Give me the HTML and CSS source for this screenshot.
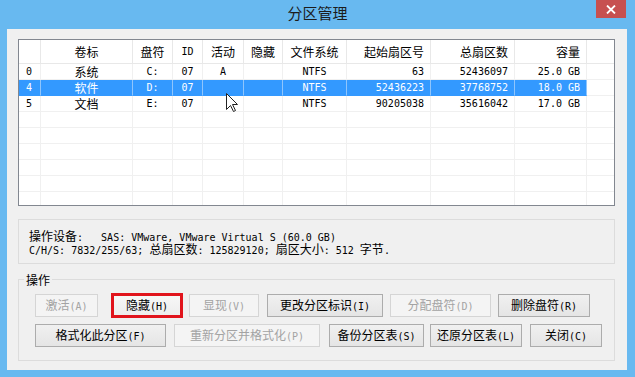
FILE: index.html
```html
<!DOCTYPE html>
<html lang="zh-CN">
<head>
  <meta charset="UTF-8">
  <meta name="viewport" content="width=device-width, initial-scale=1">
  <title>分区管理</title>
  <link rel="stylesheet" href="styles.css">
</head>
<body>
  <div class="window">
    <!-- Caption bar -->
    <div class="titlebar">
      <span class="title">分区管理</span>
      <button class="close" title="关闭">
        <svg width="10" height="9" viewBox="0 0 10 9"><path d="M1 0.5 L9 8.5 M9 0.5 L1 8.5" stroke="#fff" stroke-width="1.8"/></svg>
      </button>
    </div>

    <div class="client">
      <!-- Partition list -->
      <div class="listview">
        <div class="row head">
          <div class="cell"></div>
          <div class="cell zh c">卷标</div>
          <div class="cell zh c">盘符</div>
          <div class="cell c">ID</div>
          <div class="cell zh c">活动</div>
          <div class="cell zh c">隐藏</div>
          <div class="cell zh c">文件系统</div>
          <div class="cell zh r">起始扇区号</div>
          <div class="cell zh r">总扇区数</div>
          <div class="cell zh r">容量</div>
          <div class="cell"></div>
        </div>
        <div class="row">
          <div class="cell l">0</div>
          <div class="cell zh c">系统</div>
          <div class="cell c">C:</div>
          <div class="cell c">07</div>
          <div class="cell c">A</div>
          <div class="cell"></div>
          <div class="cell c">NTFS</div>
          <div class="cell r">63</div>
          <div class="cell r">52436097</div>
          <div class="cell r">25.0 GB</div>
          <div class="cell"></div>
        </div>
        <div class="row sel">
          <div class="cell l">4</div>
          <div class="cell zh c">软件</div>
          <div class="cell c">D:</div>
          <div class="cell c">07</div>
          <div class="cell"></div>
          <div class="cell"></div>
          <div class="cell c">NTFS</div>
          <div class="cell r">52436223</div>
          <div class="cell r">37768752</div>
          <div class="cell r">18.0 GB</div>
          <div class="cell"></div>
        </div>
        <div class="row">
          <div class="cell l">5</div>
          <div class="cell zh c">文档</div>
          <div class="cell c">E:</div>
          <div class="cell c">07</div>
          <div class="cell"></div>
          <div class="cell"></div>
          <div class="cell c">NTFS</div>
          <div class="cell r">90205038</div>
          <div class="cell r">35616042</div>
          <div class="cell r">17.0 GB</div>
          <div class="cell"></div>
        </div>
        <!-- empty grid rows -->
        <div class="row"><div class="cell"></div><div class="cell"></div><div class="cell"></div><div class="cell"></div><div class="cell"></div><div class="cell"></div><div class="cell"></div><div class="cell"></div><div class="cell"></div><div class="cell"></div><div class="cell"></div></div>
        <div class="row"><div class="cell"></div><div class="cell"></div><div class="cell"></div><div class="cell"></div><div class="cell"></div><div class="cell"></div><div class="cell"></div><div class="cell"></div><div class="cell"></div><div class="cell"></div><div class="cell"></div></div>
        <div class="row"><div class="cell"></div><div class="cell"></div><div class="cell"></div><div class="cell"></div><div class="cell"></div><div class="cell"></div><div class="cell"></div><div class="cell"></div><div class="cell"></div><div class="cell"></div><div class="cell"></div></div>
        <div class="row"><div class="cell"></div><div class="cell"></div><div class="cell"></div><div class="cell"></div><div class="cell"></div><div class="cell"></div><div class="cell"></div><div class="cell"></div><div class="cell"></div><div class="cell"></div><div class="cell"></div></div>
        <div class="row"><div class="cell"></div><div class="cell"></div><div class="cell"></div><div class="cell"></div><div class="cell"></div><div class="cell"></div><div class="cell"></div><div class="cell"></div><div class="cell"></div><div class="cell"></div><div class="cell"></div></div>
        <div class="row"><div class="cell"></div><div class="cell"></div><div class="cell"></div><div class="cell"></div><div class="cell"></div><div class="cell"></div><div class="cell"></div><div class="cell"></div><div class="cell"></div><div class="cell"></div><div class="cell"></div></div>
      </div>

      <!-- Device info -->
      <div class="info">
        <div class="info-line"><span class="zh">操作设备</span>:   SAS: VMware, VMware Virtual S (60.0 GB)</div>
        <div class="info-line">C/H/S: 7832/255/63; <span class="zh">总扇区数</span>: 125829120; <span class="zh">扇区大小</span>: 512 <span class="zh">字节</span>.</div>
      </div>

      <!-- Operations -->
      <div class="group">
        <div class="group-label zh">操作</div>
        <div class="btn-row first">
          <button class="btn w63" disabled><span class="zh">激活</span>(A)</button>
          <button class="btn marked w72"><span class="zh">隐藏</span>(H)</button>
          <button class="btn w70 pull" disabled><span class="zh">显现</span>(V)</button>
          <button class="btn w116 push"><span class="zh">更改分区标识</span>(I)</button>
          <button class="btn w101" disabled><span class="zh">分配盘符</span>(D)</button>
          <button class="btn w92"><span class="zh">删除盘符</span>(R)</button>
        </div>
        <div class="btn-row second">
          <button class="btn w131"><span class="zh">格式化此分区</span>(F)</button>
          <button class="btn w146" disabled><span class="zh">重新分区并格式化</span>(P)</button>
          <button class="btn w95 push"><span class="zh">备份分区表</span>(S)</button>
          <button class="btn w92 back"><span class="zh">还原分区表</span>(L)</button>
          <button class="btn w72"><span class="zh">关闭</span>(C)</button>
        </div>
      </div>
    </div>

    <!-- mouse pointer -->
    <svg class="pointer" width="13" height="20" viewBox="0 0 13 20">
      <path d="M0.5 0.5 L0.5 16.5 L4.5 12.5 L7.5 18.5 L9.5 17.5 L6.5 11.5 L11.5 11.5 Z" fill="#fff" stroke="#222" stroke-width="1"/>
    </svg>
  </div>
</body>
</html>
```

FILE: styles.css
```css
/* Reset */
* {
  margin: 0;
  padding: 0;
  box-sizing: border-box;
}
body {
  width: 635px;
  height: 377px;
  overflow: hidden;
  font-family: "DejaVu Sans Mono", monospace;
  font-size: 10px;
  color: #000;
}
.zh {
  font-family: "Noto Sans CJK SC", sans-serif;
  font-size: 12px;
}

/* Window frame */
.window {
  position: relative;
  width: 635px;
  height: 377px;
  background: #68b9f0;
  display: flex;
  flex-direction: column;
}
.titlebar {
  height: 29px;
  display: flex;
  justify-content: center;
  align-items: center;
}
.title {
  font-family: "Noto Sans CJK SC", sans-serif;
  font-size: 15px;
  line-height: 20px;
  color: #1c1c1c;
  margin-top: -3px;
}
.close {
  position: absolute;
  top: 0;
  right: 9px;
  width: 30px;
  height: 18px;
  border: none;
  background: #c75050;
  display: flex;
  align-items: center;
  justify-content: center;
}
.client {
  flex: 1;
  margin: 0 8px 7px 7px;
  background: #f0f0f0;
  padding: 10px 12px 0 11px;
}

/* List view */
.listview {
  height: 167px;
  border: 1px solid #828790;
  background: #fff;
  overflow: hidden;
}
.row {
  display: grid;
  grid-template-columns: 22px 92px 40px 30px 41px 39px 64px 84px 84px 72px 1fr;
  height: 16px;
}
.cell {
  border-right: 1px solid #f0f0f0;
  border-bottom: 1px solid #f0f0f0;
  line-height: 15px;
  white-space: pre;
  overflow: hidden;
}
.cell:last-child {
  border-right: none;
}
.head {
  height: 24px;
}
.head .cell {
  line-height: 23px;
  border-color: #e8e8e8;
}
.l { padding-left: 7px; }
.c { text-align: center; }
.r { text-align: right; padding-right: 6px; }
.sel .cell {
  background: #3399ff;
  color: #fff;
  border-right-color: #8fc5fc;
  border-bottom-color: #3399ff;
}
.sel .cell:last-child {
  background: #fff;
  border-bottom-color: #f0f0f0;
}

/* Device info box */
.info {
  margin-top: 13px;
  height: 45px;
  border: 1px solid #dcdcdc;
  padding: 9px 10px 0;
}
.info-line {
  height: 13px;
  line-height: 13px;
  white-space: pre;
}

/* Operations group */
.group {
  margin-top: 15px;
  border: 1px solid #dcdcdc;
  padding: 0 0 13px 16px;
}
.group-label {
  width: fit-content;
  margin: -7px 0 0 -11px;
  padding: 0 2px;
  line-height: 13px;
  background: #f0f0f0;
}
.btn-row {
  display: flex;
  align-items: center;
  height: 23px;
}
.btn-row.first {
  margin-top: 8px;
  gap: 7px;
}
.btn-row.second {
  margin-top: 7px;
  gap: 8px;
}
.btn {
  height: 23px;
  border: 1px solid #acacac;
  background: linear-gradient(#f0f0f0, #e5e5e5);
  font: inherit;
  line-height: 14px;
  color: #000;
  white-space: nowrap;
}
.btn:disabled {
  border-color: #d5d5d5;
  background: #f4f4f4;
  color: #a3a3a3;
}
.btn.marked {
  height: 25px;
  margin-left: 6px;
  border: 3px solid #e1141c;
  background: linear-gradient(#f7f7f7, #ededed);
}
.pull { margin-left: -1px; }
.push { margin-left: 1px; }
.back { margin-left: -2px; }
.w63 { width: 63px; }
.w70 { width: 70px; }
.w72 { width: 72px; }
.w92 { width: 92px; }
.w95 { width: 95px; }
.w101 { width: 101px; }
.w116 { width: 116px; }
.w131 { width: 131px; }
.w146 { width: 146px; }

/* Pointer over the list */
.pointer {
  position: absolute;
  left: 226px;
  top: 93px;
}
```
